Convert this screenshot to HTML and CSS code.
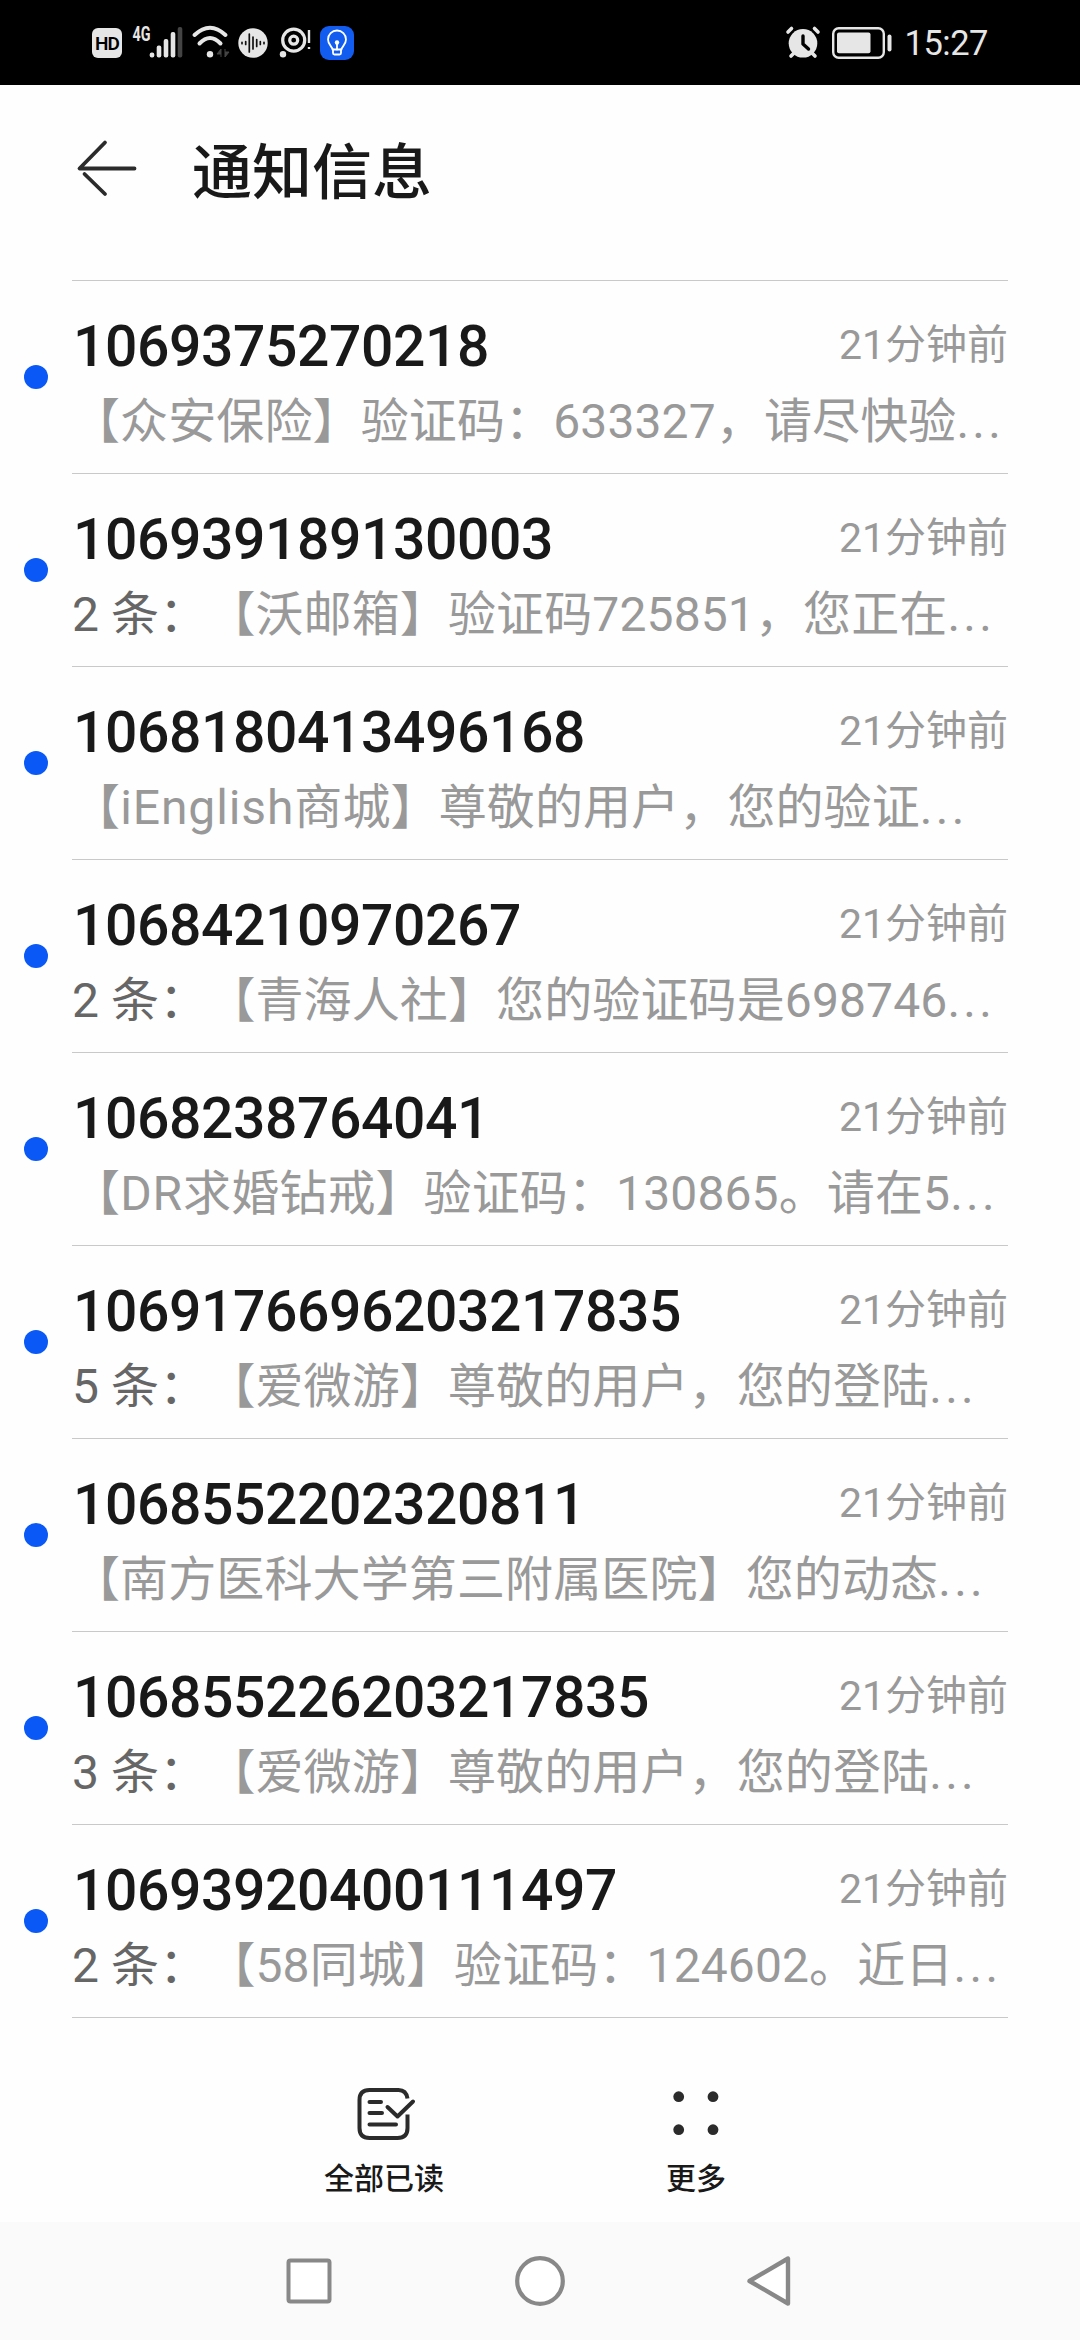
FILE: index.html
```html
<!DOCTYPE html>
<html lang="zh-CN">
<head>
    <meta charset="UTF-8">
    <meta name="viewport" content="width=device-width, initial-scale=1.0">
    <title>通知信息</title>
    <link rel="stylesheet" href="styles.css">
</head>
<body>
    <div class="status-bar">
        <div class="status-left">
            <span class="hd">HD</span>
            <svg class="signal" width="52" height="34" viewBox="0 0 52 34">
                <text class="net-type" x="0.500" y="15" textLength="18" lengthAdjust="spacingAndGlyphs">4G</text>
                <g fill="#e6e6e6">
                    <rect x="17.7" y="26.5" width="4.6" height="5" rx="2"/>
                    <rect x="24.7" y="19.5" width="4.6" height="12" rx="2"/>
                    <rect x="31.7" y="13" width="4.6" height="18.5" rx="2"/>
                    <rect x="38.7" y="6" width="4.6" height="25.5" rx="2"/>
                    <rect x="45.7" y="1" width="4.6" height="30.5" rx="2" fill="#444"/>
                </g>
            </svg>
            <svg class="wifi" width="40" height="34" viewBox="0 0 40 34">
                <g fill="none" stroke="#e6e6e6" stroke-width="4" stroke-linecap="round">
                    <path d="M2.5 9Q18 -5.5 33.5 9"/>
                    <path d="M7.500 17.500Q18 6.500 28.500 17.500"/>
                </g>
                <circle cx="18" cy="28.300" r="3.200" fill="#e6e6e6"/>
                <path d="M29 23v8M29 23l-4 5h4M33 31v-8M33 31l4-5h-4" fill="#444" stroke="#444" stroke-width="1"/>
            </svg>
            <svg class="wave" width="30" height="30" viewBox="0 0 30 30">
                <circle cx="15" cy="15" r="14.700" fill="#e6e6e6"/>
                <path d="M4 14.300v1.400M7.700 13.500v3M11.300 6v18M15 9v12M18.700 11.500v7M22.300 13.500v3M26 14.300v1.400" stroke="#111" stroke-width="1.700" stroke-linecap="round"/>
            </svg>
            <svg class="eye" width="32" height="32" viewBox="0 0 32 32">
                <circle cx="14.700" cy="13.200" r="11" fill="none" stroke="#e6e6e6" stroke-width="3.200"/>
                <circle cx="14.700" cy="13.200" r="4" fill="none" stroke="#e6e6e6" stroke-width="3.200"/>
                <circle cx="4" cy="27.300" r="3.200" fill="#e6e6e6"/>
                <path d="M30 3v13M30 20v2" stroke="#e6e6e6" stroke-width="2.400"/>
            </svg>
            <svg class="bulb" width="34" height="34" viewBox="0 0 34 34">
                <rect width="34" height="34" rx="9" fill="#125df0"/>
                <g fill="none" stroke="#fff" stroke-width="1.800" stroke-linecap="round" stroke-linejoin="round">
                    <path d="M12.500 23.500c0-3-4.500-4.500-4.500-10a9 9 0 0 1 18 0c0 5.500-4.500 7-4.500 10z"/>
                    <path d="M13 23.500v3.500q0 1.500 1.500 1.500h5q1.500 0 1.500-1.500v-3.500M17 17.500v6"/>
                </g>
                <circle cx="17" cy="16.500" r="2.200" fill="#fff"/>
            </svg>
        </div>
        <div class="status-right">
            <svg class="alarm" width="34" height="32" viewBox="0 0 34 32">
                <g stroke="#e6e6e6" stroke-width="3.600" stroke-linecap="round">
                    <path d="M2 5l3.500-3.500M32 5l-3.500-3.500M5 29l3-3M29 29l-3-3"/>
                </g>
                <circle cx="17" cy="16.300" r="14.300" fill="#e6e6e6"/>
                <path d="M17 9v8l5.500 5" fill="none" stroke="#000" stroke-width="3.400" stroke-linecap="round" stroke-linejoin="round"/>
            </svg>
            <svg class="battery" width="60" height="32" viewBox="0 0 60 32">
                <rect x="1.200" y="1.200" width="50.600" height="29.600" rx="5.500" fill="none" stroke="#e6e6e6" stroke-width="2.400"/>
                <rect x="5" y="5.500" width="33.500" height="20.700" rx="2" fill="#e6e6e6"/>
                <rect x="55.500" y="7.500" width="4" height="17" rx="2" fill="#e6e6e6"/>
            </svg>
            <span class="clock">15:27</span>
        </div>
    </div>

    <div class="header">
        <svg class="back" width="64" height="60" viewBox="0 0 64 60">
            <path d="M33 4.500L7.500 30.500H62.500M12.500 36L33 56" fill="none" stroke="#2b2b2b" stroke-width="3.800" stroke-linecap="round" stroke-linejoin="round"/>
        </svg>
        <h1>通知信息</h1>
    </div>

    <div class="message-list">
        <div class="message">
            <div class="message-top">
                <span class="sender">1069375270218</span>
                <span class="time">21分钟前</span>
            </div>
            <p class="preview">【众安保险】验证码：633327，请尽快验<span class="dots">...</span></p>
        </div>
        <div class="message">
            <div class="message-top">
                <span class="sender">106939189130003</span>
                <span class="time">21分钟前</span>
            </div>
            <p class="preview"><span class="count">2 条：</span>【沃邮箱】验证码725851，您正在<span class="dots">...</span></p>
        </div>
        <div class="message">
            <div class="message-top">
                <span class="sender">1068180413496168</span>
                <span class="time">21分钟前</span>
            </div>
            <p class="preview">【<span class="latin">iEnglish</span>商城】尊敬的用户，您的验证<span class="dots">...</span></p>
        </div>
        <div class="message">
            <div class="message-top">
                <span class="sender">10684210970267</span>
                <span class="time">21分钟前</span>
            </div>
            <p class="preview"><span class="count">2 条：</span>【青海人社】您的验证码是698746<span class="dots">...</span></p>
        </div>
        <div class="message">
            <div class="message-top">
                <span class="sender">1068238764041</span>
                <span class="time">21分钟前</span>
            </div>
            <p class="preview">【<span class="latin">DR</span>求婚钻戒】验证码：130865。请在5<span class="dots">...</span></p>
        </div>
        <div class="message">
            <div class="message-top">
                <span class="sender">1069176696203217835</span>
                <span class="time">21分钟前</span>
            </div>
            <p class="preview"><span class="count">5 条：</span>【爱微游】尊敬的用户，您的登陆<span class="dots">...</span></p>
        </div>
        <div class="message">
            <div class="message-top">
                <span class="sender">1068552202320811</span>
                <span class="time">21分钟前</span>
            </div>
            <p class="preview">【南方医科大学第三附属医院】您的动态<span class="dots">...</span></p>
        </div>
        <div class="message">
            <div class="message-top">
                <span class="sender">106855226203217835</span>
                <span class="time">21分钟前</span>
            </div>
            <p class="preview"><span class="count">3 条：</span>【爱微游】尊敬的用户，您的登陆<span class="dots">...</span></p>
        </div>
        <div class="message">
            <div class="message-top">
                <span class="sender">10693920400111497</span>
                <span class="time">21分钟前</span>
            </div>
            <p class="preview"><span class="count">2 条：</span>【58同城】验证码：124602。近日<span class="dots">...</span></p>
        </div>
    </div>

    <div class="toolbar">
        <div class="tool">
            <svg width="60" height="60" viewBox="0 0 60 60">
                <g fill="none" stroke="#2b2b2b" stroke-width="4" stroke-linecap="round" stroke-linejoin="round">
                    <path d="M53.500 14.500C52.500 8 49 6 44.500 6H15.500Q5.500 6 5.500 16V44Q5.500 54 15.500 54H43.500Q53.500 54 53.500 44V30.500" stroke-linecap="butt"/>
                    <path d="M15.500 18H27M15.500 29H28M15.500 40.500H42M33.500 23L43.500 32.500L59 17.500"/>
                </g>
            </svg>
            <span>全部已读</span>
        </div>
        <div class="tool">
            <svg width="60" height="60" viewBox="0 0 60 60">
                <g fill="#2b2b2b">
                    <circle cx="12.700" cy="12.700" r="5.400"/>
                    <circle cx="47" cy="12.700" r="5.400"/>
                    <circle cx="12.700" cy="45.700" r="5.400"/>
                    <circle cx="47" cy="45.700" r="5.400"/>
                </g>
            </svg>
            <span>更多</span>
        </div>
    </div>

    <div class="nav-bar">
        <svg width="60" height="60" viewBox="0 0 60 60">
            <rect x="9.500" y="9.500" width="41" height="41" rx="2" fill="#fff" stroke="#888" stroke-width="4"/>
        </svg>
        <svg width="60" height="60" viewBox="0 0 60 60">
            <circle cx="30" cy="30" r="22.800" fill="#fff" stroke="#888" stroke-width="4.200"/>
        </svg>
        <svg width="60" height="60" viewBox="0 0 60 60">
            <path d="M47 7.500V52.500L8.500 30Z" fill="#fff" stroke="#888" stroke-width="4.400" stroke-linejoin="round"/>
        </svg>
    </div>
</body>
</html>
```
FILE: styles.css
```css
* {
    box-sizing: border-box;
}
body {
    margin: 0;
    height: 2340px;
    display: flex;
    flex-direction: column;
    background-color: #fefefe;
    color: #191919;
    font-family: Roboto, "Noto Sans CJK SC", sans-serif;
    text-spacing-trim: space-all;
}
svg {
    display: block;
    flex-shrink: 0;
    overflow: visible;
}
.status-bar {
    height: 85px;
    padding: 0 92px;
    display: flex;
    justify-content: space-between;
    align-items: center;
    background-color: #000;
}
.status-left,
.status-right {
    display: flex;
    align-items: center;
}
.hd {
    width: 30px;
    height: 30px;
    border-radius: 6px;
    background-color: #e6e6e6;
    color: #000;
    font-size: 19px;
    font-weight: 600;
    letter-spacing: -1px;
    line-height: 31px;
    text-align: center;
}
.signal {
    margin-left: 10px;
}
.net-type {
    fill: #e6e6e6;
    font-size: 20px;
    font-weight: 700;
}
.wifi {
    margin-left: 8px;
}
.wave {
    margin-left: 6px;
}
.eye {
    margin-left: 11px;
}
.bulb {
    margin-left: 9px;
}
.alarm {
    margin-right: 12px;
}
.battery {
    margin-right: 13px;
}
.clock {
    font-size: 34.500px;
    line-height: 40px;
    letter-spacing: -0.500px;
    color: #e6e6e6;
}
.header {
    height: 195px;
    padding: 53px 72px 0;
    display: flex;
    align-items: flex-start;
}
.header h1 {
    margin: -8px 0 0 56px;
    font-size: 60px;
    font-weight: 500;
    line-height: 88px;
}
.message-list {
    margin: 0 72px;
    border-top: 1px solid #c9c9c9;
}
.message {
    position: relative;
    height: 193px;
    padding-top: 30px;
    border-bottom: 1px solid #c9c9c9;
}
/* unread marker */
.message::before {
    content: "";
    position: absolute;
    left: -48px;
    top: 84px;
    width: 24px;
    height: 24px;
    border-radius: 50%;
    background-color: #0a59f7;
}
.message-top {
    display: flex;
    justify-content: space-between;
    height: 75px;
}
.sender {
    padding-left: 1px;
    font-size: 57px;
    font-weight: 500;
    line-height: 72px;
    letter-spacing: -0.400px;
}
.time {
    font-size: 41px;
    line-height: 69px;
    color: #999;
}
.preview {
    margin: 0;
    height: 72px;
    font-size: 48px;
    line-height: 72px;
    letter-spacing: 0.120px;
    white-space: nowrap;
    color: #999;
}
.count {
    color: #666;
}
.latin {
    letter-spacing: 0.900px;
}
.dots {
    letter-spacing: 3.300px;
}
.toolbar {
    flex: 1;
    padding: 66px 228px 0;
    display: grid;
    grid-template-columns: repeat(2, 312px);
}
.tool {
    display: flex;
    flex-direction: column;
    align-items: center;
    font-size: 30px;
    font-weight: 500;
    line-height: 44px;
    gap: 13px;
}
.nav-bar {
    height: 118px;
    padding: 0 193px;
    display: grid;
    grid-template-columns: repeat(3, 231px);
    justify-items: center;
    align-items: center;
    background-color: #fafafa;
}
```
